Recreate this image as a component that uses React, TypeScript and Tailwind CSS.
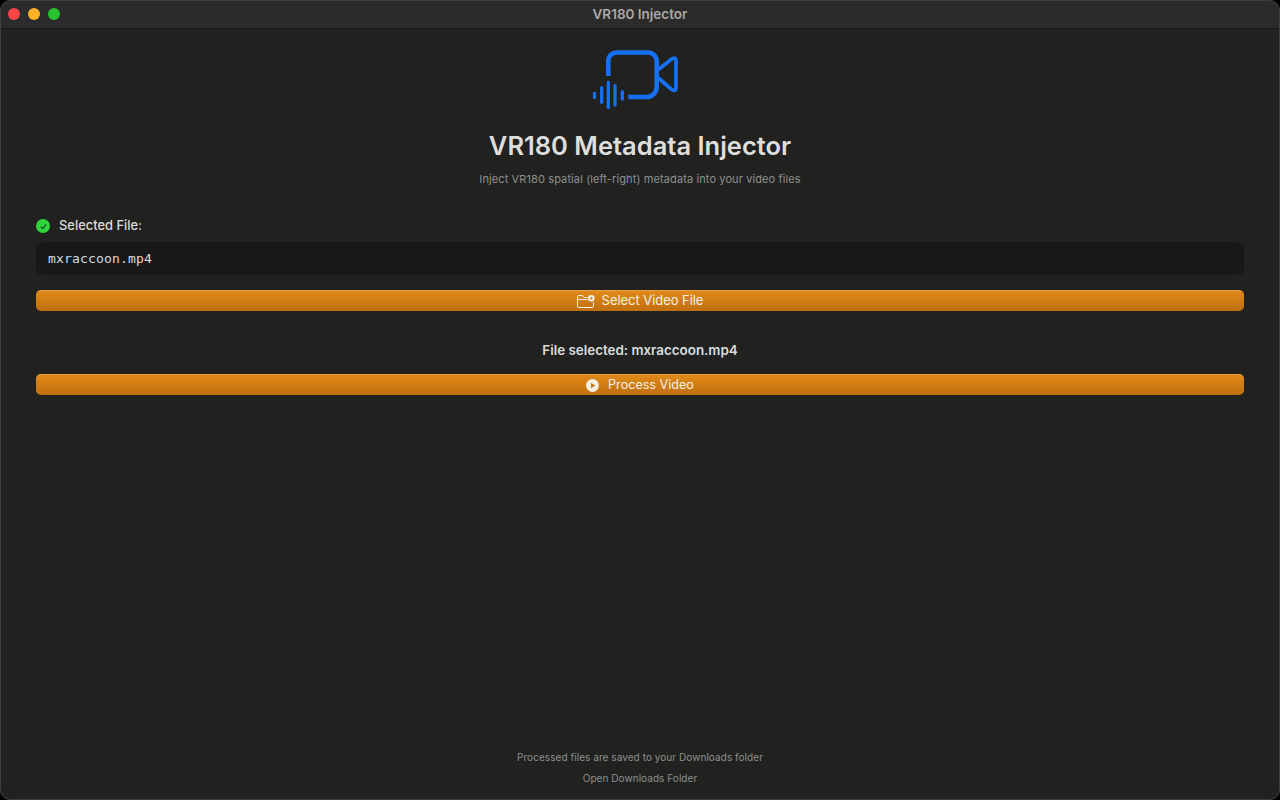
export default function App() {
  return (
    <div className="h-[800px] w-[1280px] bg-black">
      <div className="relative flex h-[800px] w-[1280px] flex-col overflow-hidden rounded-[10px] border border-[#3f3f3f] bg-[#212220] font-['Inter',sans-serif] text-[#e0e0de]">
        <header className="relative flex h-[28px] shrink-0 items-center justify-center border-b border-[#191919] bg-[#2b2b2b]">
          <div className="absolute left-[7px] top-[7px] flex gap-[8px]">
            <span className="h-[12px] w-[12px] rounded-full bg-[#fa4647]" />
            <span className="h-[12px] w-[12px] rounded-full bg-[#fdb024]" />
            <span className="h-[12px] w-[12px] rounded-full bg-[#28c231]" />
          </div>
          <span className="text-[13.500px] font-semibold text-[#a9a9a9]">VR180 Injector</span>
        </header>

        <main className="flex flex-1 flex-col px-[35px]">
          <div className="flex flex-col items-center pt-[11px]">
            <svg width="120" height="80" viewBox="0 0 120 80" fill="none" stroke="#1670f5" strokeWidth="4.600">
              <path d="M28.300 36V21a8.500 8.500 0 0 1 8.500-8.500H68a8.700 8.700 0 0 1 8.700 8.700V47a10 10 0 0 1-10 10H48.300" />
              <path d="M78.500 29.500L91 19.500q5-3.500 5 2V47q0 5.500-5 2L78.500 38" strokeWidth="3.800" strokeLinejoin="round" />
              <g strokeWidth="3.300" strokeLinecap="round">
                <path d="M14.500 53.400V57.600" />
                <path d="M21.700 47.700V62.300" />
                <path d="M28.300 42.400V67.600" />
                <path d="M35 45.700V65" />
                <path d="M42.300 51.700V59" />
              </g>
            </svg>
            <h1 className="mt-[10px] text-[25.500px] leading-[32px] font-semibold text-[#dededc]">VR180 Metadata Injector</h1>
            <p className="mt-[9px] text-[11px] leading-[16px] tracking-[0.11px] text-[#8f8f8d]">Inject VR180 spatial (left-right) metadata into your video files</p>
          </div>

          <div className="mt-[31px] flex items-center gap-[9px]">
            <span className="flex h-[14px] w-[14px] items-center justify-center rounded-full bg-[#2fd43c]">
              <svg width="9" height="9" viewBox="0 0 9 9" fill="none" stroke="#123d16" strokeWidth="1.100">
                <path d="M1.800 4.600L3.600 6.500L7.200 2.300" />
              </svg>
            </span>
            <span className="text-[12.900px] leading-[16px] font-medium text-[#dcdcda]">Selected File:</span>
          </div>

          <div className="mt-[8px] flex h-[33px] items-center rounded-[6px] bg-[#181818] px-[12px] font-['DejaVu_Sans_Mono',monospace] text-[13px] tracking-[0.17px] text-[#dcdcda]">
            mxraccoon.mp4
          </div>

          <button className="mt-[15px] flex h-[21px] items-center justify-center gap-[7px] rounded-[5px] border-t border-[#e9a04a] bg-gradient-to-b from-[#e08a18] to-[#bf6f0e] text-[12.900px] text-[#f6efe4]">
            <svg width="18" height="13" viewBox="0 0 18 13" fill="none" stroke="#f6efe4" strokeWidth="1">
              <path d="M10.500 2.500H7L5.500 .5H2a1.500 1.500 0 0 0-1.500 1.500V11a1.500 1.500 0 0 0 1.500 1.500H15a1.500 1.500 0 0 0 1.500-1.500V7" />
              <path d="M.5 4.500H10.500" />
              <circle cx="14.300" cy="3.300" r="3.300" fill="#f6efe4" stroke="none" />
              <path d="M12.800 3.300H15.800M14.300 1.800V4.800" stroke="#c97a14" strokeWidth=".8" />
            </svg>
            Select Video File
          </button>

          <p className="mt-[31px] text-center text-[13.400px] leading-[16px] font-semibold text-[#dcdcda]">File selected: mxraccoon.mp4</p>

          <button className="mt-[16px] flex h-[21px] items-center justify-center gap-[9px] rounded-[5px] border-t border-[#e9a04a] bg-gradient-to-b from-[#e08a18] to-[#bf6f0e] text-[12.600px] text-[#f6efe4]">
            <svg width="13" height="13" viewBox="0 0 13 13">
              <circle cx="6.500" cy="6.500" r="6.500" fill="#f6efe4" />
              <path d="M5 3.800L9.300 6.500L5 9.200Z" fill="#c97a14" />
            </svg>
            Process Video
          </button>

          <div className="mt-auto flex flex-col items-center pb-[14px] text-[10px] text-[#8f8f8d]">
            <p className="leading-[14px] tracking-[0.06px]">Processed files are saved to your Downloads folder</p>
            <p className="mt-[7px] leading-[14px] tracking-[0.05px]">Open Downloads Folder</p>
          </div>
        </main>
      </div>
    </div>
  );
}
